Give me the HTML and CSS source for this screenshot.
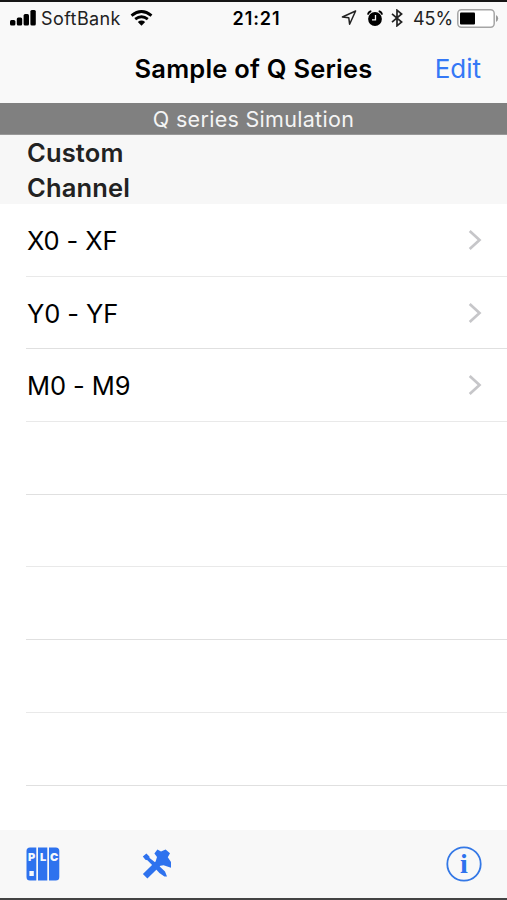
FILE: index.html
```
<!DOCTYPE html>
<html lang="en">
    <head>
        <meta charset="utf-8">
        <title>Sample of Q Series</title>
        <link rel="stylesheet" href="styles.css">
    </head>
    <body>
        <div class="status-bar">
            <div class="status-left">
                <svg class="signal" width="26" height="16" viewBox="0 0 26 16">
                    <rect x="0" y="10" width="5.4" height="5.5" rx="1.5"/>
                    <rect x="6.8" y="7.5" width="5.4" height="8" rx="1.5"/>
                    <rect x="13.6" y="4" width="5.4" height="11.5" rx="1.5"/>
                    <rect x="20.4" y="0" width="5.4" height="15.5" rx="1.5"/>
                </svg>
                <span class="carrier">SoftBank</span>
                <svg class="wifi" width="23" height="16" viewBox="0 0 23 16">
                    <path d="M1.5 5.6Q11.5-2.6 21.5 5.6M5.2 9.2Q11.5 4.2 17.8 9.2" fill="none" stroke="#000" stroke-width="2.8"/>
                    <path d="M7.8 12Q11.5 9.2 15.2 12L11.5 15.8Z"/>
                </svg>
            </div>
            <span class="time">21:21</span>
            <div class="status-right">
                <svg width="16" height="16" viewBox="0 0 16 16">
                    <path d="M14.6 1L1.4 7L7.8 7.8L8.6 14.2Z" fill="none" stroke="#222" stroke-width="1.5" stroke-linejoin="round"/>
                </svg>
                <svg class="alarm" width="16" height="17" viewBox="0 0 16 17">
                    <circle cx="8" cy="9" r="6.9"/>
                    <path d="M.9 4.6Q1.6 1.8 4.3 1.2M15.1 4.6Q14.4 1.8 11.7 1.2" fill="none" stroke="#000" stroke-width="1.8"/>
                    <path d="M8.5 5V9.8H5" fill="none" stroke="#f9f9f9" stroke-width="1.3"/>
                </svg>
                <svg class="bluetooth" width="12" height="18" viewBox="0 0 12 18">
                    <path d="M1 4.8L10.6 13L6 16.8V1.2L10.6 5L1 13.2" fill="none" stroke="#222" stroke-width="1.7"/>
                </svg>
                <span class="percent">45%</span>
                <svg class="battery" width="42" height="19" viewBox="0 0 42 19">
                    <rect x=".8" y=".8" width="36.4" height="17.4" rx="3.6" fill="#fff" stroke="#a5a5a5" stroke-width="1.5"/>
                    <rect x="3" y="3.5" width="15" height="12" rx="1"/>
                    <path d="M39 6Q41.2 7.4 41.2 9.5T39 13Z" fill="#999"/>
                </svg>
            </div>
        </div>

        <header class="nav-bar">
            <h1 class="nav-title">Sample of Q Series</h1>
            <a class="nav-edit" href="#">Edit</a>
        </header>

        <div class="banner"><span>Q series Simulation</span></div>

        <main>
            <h2 class="section-title">Custom<br>Channel</h2>
            <ul class="channels">
                <li>
                    <span>X0 - XF</span>
                    <svg class="chevron" width="14" height="22" viewBox="0 0 14 22"><path d="M1.7 2L11.5 11L1.7 20"/></svg>
                </li>
                <li>
                    <span>Y0 - YF</span>
                    <svg class="chevron" width="14" height="22" viewBox="0 0 14 22"><path d="M1.7 2L11.5 11L1.7 20"/></svg>
                </li>
                <li>
                    <span>M0 - M9</span>
                    <svg class="chevron" width="14" height="22" viewBox="0 0 14 22"><path d="M1.7 2L11.5 11L1.7 20"/></svg>
                </li>
                <li></li>
                <li></li>
                <li></li>
                <li></li>
                <li></li>
            </ul>
        </main>

        <footer class="toolbar">
            <svg class="plc" width="34" height="34" viewBox="0 0 34 34">
                <path d="M4 .5H10.3V33.5H4Q.5 33.5 .5 30V4Q.5 .5 4 .5ZM12 .5H21.3V33.5H12ZM23 .5H29.8Q33.3 .5 33.3 4V30Q33.3 33.5 29.8 33.5H23Z"/>
                <text x="1.9" y="14">P</text>
                <text x="13.9" y="14">L</text>
                <text x="23.9" y="14">C</text>
                <rect x="3.4" y="24" width="4.4" height="5" fill="#f4f7fc"/>
            </svg>
            <svg class="tools" width="30" height="31" viewBox="0 0 30 31">
                <path d="M.9 25L13.6 12.4L15 8L12.4 4.4L15.4 .6L19 2.4L23.6 .6L28 4.2L25.8 8.2L29 13L29 18.8L21.6 16.2L18.4 16.8L5.4 29.6Z"/>
                <path d="M.8 7.6L4.4 4.4L7.4 7.4L7.6 9L14 14L23 22.6L25 27.6L22.4 27.6L17.4 24L10.6 16.4L5.4 11.2L3.4 10.8Z"/>
            </svg>
            <svg class="info" width="36" height="36" viewBox="0 0 36 36">
                <circle cx="18" cy="18" r="16.7"/>
                <text x="18" y="27">i</text>
            </svg>
        </footer>
    </body>
</html>
```
FILE: styles.css
```
* {
    box-sizing: border-box;
}
body {
    margin: 0;
    height: 900px;
    display: flex;
    flex-direction: column;
    border-top: 2px solid #161616;
    border-bottom: 2px solid #444;
    background: #fff;
    color: #000;
    font-family: Inter, "Liberation Sans", sans-serif;
    overflow: hidden;
}
svg {
    display: block;
    flex-shrink: 0;
}
.status-bar {
    height: 32px;
    flex-shrink: 0;
    display: grid;
    grid-template-columns: 1fr auto 1fr;
    align-items: center;
    padding: 0 8px 0 10px;
    background: #f9f9f9;
    font-size: 18px;
}
.status-left,
.status-right {
    display: flex;
    align-items: center;
}
.status-right {
    justify-content: flex-end;
}
.carrier {
    margin: 0 9px 0 5px;
    color: #222;
    letter-spacing: .4px;
}
.time {
    padding-left: 4px;
    font-weight: 600;
    letter-spacing: .9px;
}
.alarm {
    margin-left: 10px;
}
.bluetooth {
    margin: 0 10px 0 8px;
}
.percent {
    margin-right: 4px;
    color: #222;
    letter-spacing: -.1px;
}
.nav-bar {
    height: 69px;
    flex-shrink: 0;
    display: grid;
    grid-template-columns: 1fr auto 1fr;
    align-items: center;
    padding: 0 26px;
    background: #f9f9f9;
}
.nav-title {
    grid-column: 2;
    margin: 0;
    font-size: 25.5px;
    font-weight: 600;
    letter-spacing: .22px;
    line-height: 69px;
}
.nav-edit {
    justify-self: end;
    padding-bottom: 1px;
    color: #3478f6;
    font-size: 26px;
    text-decoration: none;
}
.banner {
    height: 32px;
    flex-shrink: 0;
    background: #808080;
    border-bottom: 1px solid #999;
    color: #f4f4f4;
    font-size: 21.5px;
    letter-spacing: .3px;
    line-height: 32px;
    text-align: center;
}
.section-title {
    height: 69px;
    margin: 0;
    padding: 1px 0 0 27px;
    background: #f7f7f7;
    color: #222;
    font-size: 25.5px;
    font-weight: 600;
    letter-spacing: .15px;
    line-height: 34.5px;
}
.channels {
    margin: 0;
    padding: 0 0 0 26px;
    list-style: none;
}
.channels li {
    height: 72.7px;
    display: flex;
    align-items: center;
    justify-content: space-between;
    padding-right: 25px;
    border-bottom: 1px solid #e9e9e9;
    font-size: 25.5px;
}
.channels li:nth-child(2n) {
    border-bottom-color: #e0e0e0;
}
.channels span {
    padding: 1px 0 0 1px;
    letter-spacing: -.1px;
}
.chevron path {
    fill: none;
    stroke: #c6c6c9;
    stroke-width: 2.7;
}
.toolbar {
    height: 68px;
    flex-shrink: 0;
    margin-top: auto;
    display: flex;
    align-items: center;
    padding: 0 25px 0 26px;
    background: #f8f8f8;
    fill: #2e72ee;
}
.plc text {
    fill: #f4f7fc;
    font-size: 11px;
    font-weight: 900;
}
.tools {
    margin-left: 82px;
}
.info {
    margin-left: auto;
}
.info circle {
    fill: none;
    stroke: #3478e6;
    stroke-width: 1.8;
}
.info text {
    font-family: "Liberation Serif", serif;
    font-size: 28px;
    font-weight: 700;
    text-anchor: middle;
}
```
